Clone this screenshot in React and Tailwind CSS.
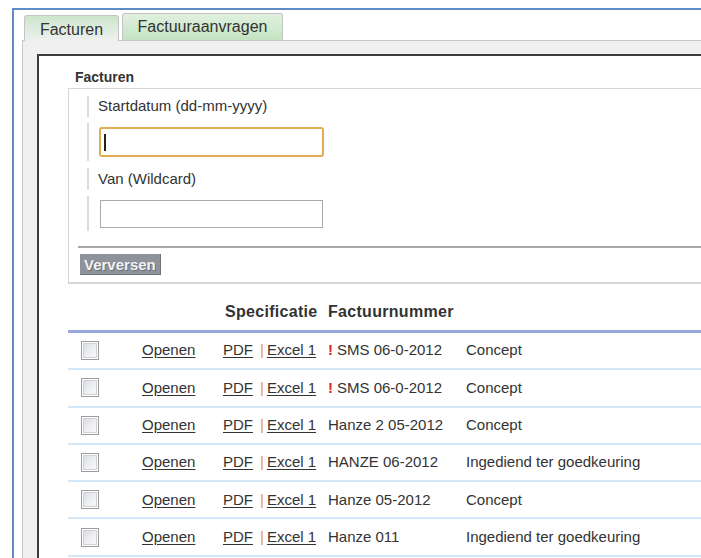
const rows = [
  { nr: "SMS 06-0-2012", warn: true, status: "Concept" },
  { nr: "SMS 06-0-2012", warn: true, status: "Concept" },
  { nr: "Hanze 2 05-2012", warn: false, status: "Concept" },
  { nr: "HANZE 06-2012", warn: false, status: "Ingediend ter goedkeuring" },
  { nr: "Hanze 05-2012", warn: false, status: "Concept" },
  { nr: "Hanze 011", warn: false, status: "Ingediend ter goedkeuring" },
];

const Checkbox = () => (
  <div className="w-[18px] h-[19px] border border-[#9c9c9c] bg-white p-[1px]">
    <div className="w-full h-full bg-gradient-to-br from-[#d9dce4] via-[#eceef2] to-[#f8f8fa] border border-[#cfd1d8]" />
  </div>
);

const InvoiceRow = ({ nr, warn, status }) => (
  <div className="flex items-center h-[37.3px] border-b-2 border-[#d4e7f8] text-[15px] text-[#333]">
    <div className="w-[62px] pl-[13px]">
      <Checkbox />
    </div>
    <div className="w-[85px] pl-[12px]">
      <span className="underline underline-offset-2 cursor-pointer">Openen</span>
    </div>
    <div className="w-[105px] pl-[8px] flex items-center whitespace-nowrap">
      <span className="underline underline-offset-2 cursor-pointer">PDF</span>
      <span className="ml-[7px] text-[#e59a3c]">|</span>
      <span className="ml-[3px] underline underline-offset-2 cursor-pointer">Excel 1</span>
    </div>
    <div className="w-[138px] pl-[8px] whitespace-nowrap">
      {warn && <span className="font-bold text-[#e3241b] mr-[4px]">!</span>}
      {nr}
    </div>
    <div className="pl-[8px] whitespace-nowrap">{status}</div>
  </div>
);

export default function App() {
  return (
    <div
      className="w-[701px] h-[558px] overflow-hidden bg-white pt-[8px] pl-[12px] text-[#333]"
      style={{ fontFamily: '"Liberation Sans", Arial, sans-serif' }}
    >
      <div className="w-[900px] h-[600px] border-l-2 border-t-2 border-[#5f8bc6] pt-[3px] pl-[10px]">
        {/* tabs */}
        <div className="flex items-end gap-[3px] h-[27px]">
          <div className="relative z-10 w-[95px] h-[26px] mb-[-1px] rounded-t-[3px] border border-b-0 border-[#c4c4c4] bg-gradient-to-b from-[#cbe6cb] to-[#f0f0f0] flex items-center justify-center text-[16px] pt-[2px]">
            Facturen
          </div>
          <div className="w-[161px] h-[27px] rounded-t-[3px] border border-b-0 border-[#c4c4c4] bg-gradient-to-b from-[#e0f1df] to-[#c4e3c2] flex items-center justify-center text-[16px] pb-[1px]">
            Factuuraanvragen
          </div>
        </div>

        {/* panel */}
        <div className="-ml-[2px] border-l border-t border-[#c8c8c8] bg-[#f0f0f0] pl-[14px] pt-[13px] h-[520px]">
          <div className="h-full bg-white border-l-2 border-t-2 border-[#3c3c3c] pl-[29px]">
            <div className="pt-[11px] pl-[7px] h-[32px] text-[14px] font-bold text-[#333]">Facturen</div>

            {/* filter fieldset */}
            <div className="border-l border-t border-b-2 border-[#d6d6d6] pb-[7px]">
              <div className="ml-[18px] mt-[7px] h-[21px] border-l-2 border-[#dcdcdc] pl-[9px] flex items-center text-[15px]">
                Startdatum (dd-mm-yyyy)
              </div>
              <div className="ml-[18px] mt-[6px] h-[38px] border-l-2 border-[#dcdcdc] pl-[10px] pt-[4px]">
                <div className="w-[225px] h-[30px] rounded-[3px] border-2 border-[#e3ad55] bg-white flex items-center pl-[3px]">
                  <div className="w-[2px] h-[17px] bg-[#222]" />
                </div>
              </div>
              <div className="ml-[18px] mt-[7px] h-[22px] border-l-2 border-[#dcdcdc] pl-[9px] flex items-center text-[15px]">
                Van (Wildcard)
              </div>
              <div className="ml-[18px] mt-[6px] h-[35px] border-l-2 border-[#dcdcdc] pl-[11px] pt-[4px]">
                <div className="w-[223px] h-[28px] border border-[#a9a9a9] bg-white" />
              </div>

              <div className="ml-[9px] mt-[15px] border-t-2 border-[#a8a8a8]" />
              <div className="ml-[11px] mt-[6px] flex">
                <button className="h-[21px] px-[4px] bg-[#8d929b] border-b border-r border-[#6e7279] text-[15px] font-bold text-[#f2f2f2] leading-none [text-shadow:1px_1px_0_#6a6e75]">
                  Verversen
                </button>
              </div>
            </div>

            {/* invoice table */}
            <div className="mt-[17px]">
              <div className="flex items-end h-[32px] pb-[6px] border-b-[3px] border-[#98a7de] text-[16px] font-bold tracking-[0.3px]">
                <div className="w-[62px]" />
                <div className="w-[85px]" />
                <div className="w-[105px] pl-[10px]">Specificatie</div>
                <div className="pl-[8px]">Factuurnummer</div>
              </div>
              {rows.map((r, i) => (
                <InvoiceRow key={i} {...r} />
              ))}
            </div>
          </div>
        </div>
      </div>
    </div>
  );
}
